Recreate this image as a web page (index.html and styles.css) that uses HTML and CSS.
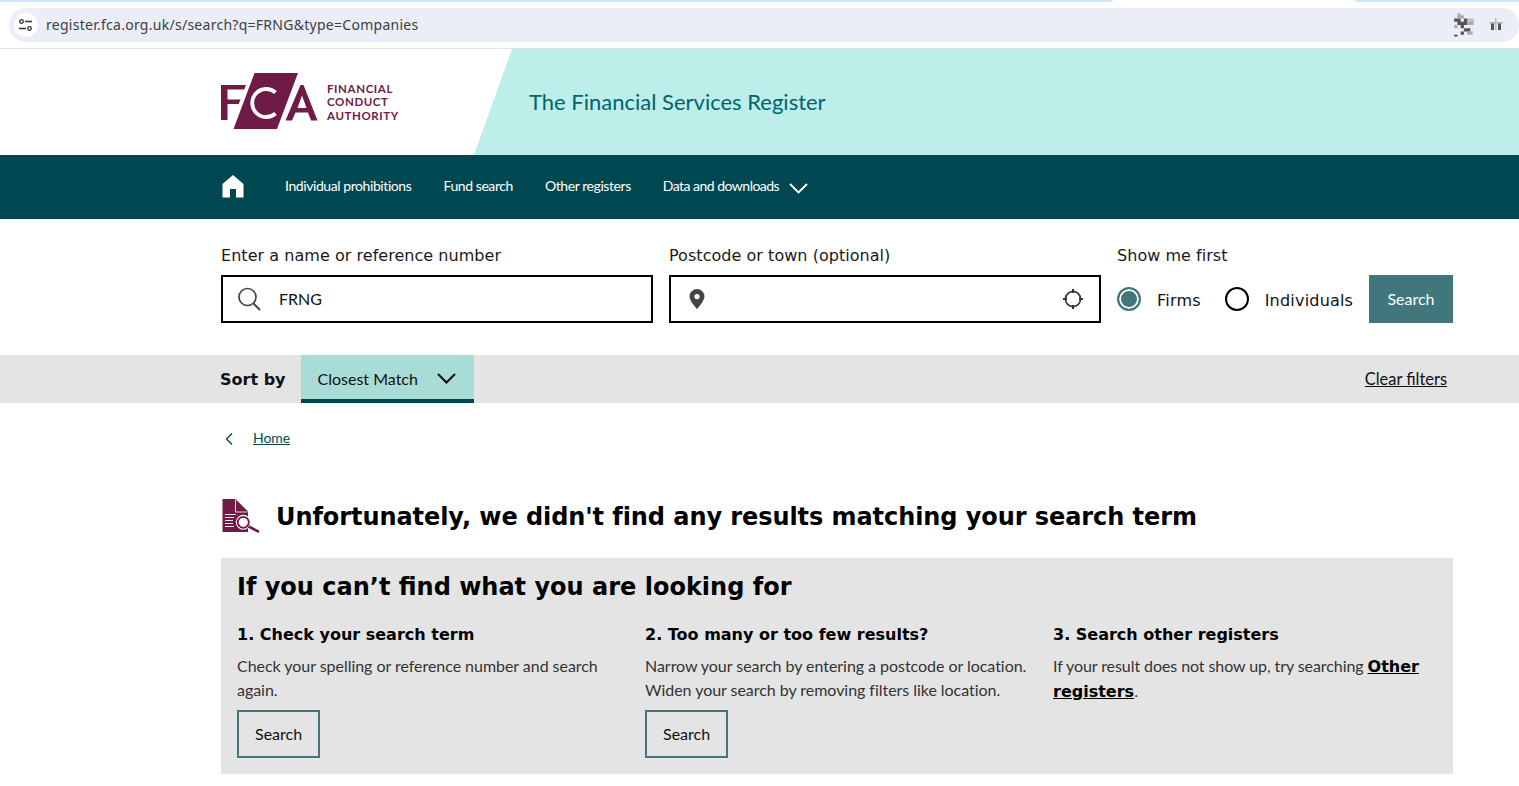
FILE: index.html
```html
<!DOCTYPE html>
<html lang="en">
<head>
<meta charset="utf-8">
<title>Financial Services Register</title>
<link rel="stylesheet" href="styles.css">
</head>
<body>
<div class="chrome">
  <div class="tabstrip"><span class="strip-a"></span><span class="strip-b"></span><span class="strip-c"></span></div>
  <div class="addressbar">
    <span class="site-icon">
      <svg width="16" height="12" viewBox="0 0 16 12"><circle cx="3.5" cy="2.5" r="1.8" fill="none" stroke="#333" stroke-width="1.3"/><path d="M7 2.5h7M1 9.5h7" stroke="#333" stroke-width="1.6"/><circle cx="11.5" cy="9.5" r="1.8" fill="none" stroke="#333" stroke-width="1.3"/></svg>
    </span>
    <span class="url">register.fca.org.uk/s/search?q=FRNG&amp;type=Companies</span>
    <span class="ext-icons">
      <svg width="22" height="26" viewBox="0 0 20 24"><path d="M3 1h3v3H3zM12 6h6v3h-6z" fill="#bbb"/><path d="M0 6h6v3H0zM9 6h3v6H9zM3 9h6v3H3zM6 12h3v3H6zM9 15h6v3H9zM6 18h3v3H6z" fill="#555"/><path d="M12 9h6v3h-6zM0 12h3v3H0zM12 18h5v3h-5zM3 3h6v3H3z" fill="#aaa"/><path d="M0 21h3v1.500H0z" fill="#333"/></svg>
      <svg width="14" height="14" viewBox="0 0 14 14"><path d="M2 5h3v7H2zM9 5h3v7H9z" fill="#555"/><path d="M0 4h14v1.500H0zM6 0h1.500v12H6z" fill="#bbb"/></svg>
    </span>
  </div>
</div>

<header class="masthead">
  <div class="brand">
    <svg class="fca-mark" width="98" height="57" viewBox="0 0 98 57" aria-label="FCA">
      <path d="M0 12h25l-1.800 4.500H6.500V26.500h13l-1.800 4.500H6.500v16H0z" fill="#701b45"/>
      <path d="M33.500 0h43.500L56 56H12.500z" fill="#701b45"/>
      <path d="M54.500 19.500A14 14 0 1 0 54.500 40.500" fill="none" stroke="#fff" stroke-width="3.800"/>
      <path d="M64.500 47.500 79.500 12h3L96.500 47.500h-6.500l-3-8H74.500l-3.500 8zM76.500 35h9L81 22.500z" fill="#701b45" fill-rule="evenodd"/>
    </svg>
    <div class="brand-name">FINANCIAL<br>CONDUCT<br>AUTHORITY</div>
  </div>
  <div class="tagline"><span>The Financial Services Register</span></div>
</header>

<nav class="mainnav">
  <svg class="home" width="22" height="23" viewBox="0 0 22 23"><path d="M11 0 21.500 9v13.500H14V14H8v8.500H.5V9z" fill="#fff" stroke="none"/></svg>
  <a href="#">Individual prohibitions</a>
  <a href="#">Fund search</a>
  <a href="#">Other registers</a>
  <a href="#" class="has-menu">Data and downloads
    <svg width="19" height="11" viewBox="0 0 19 11"><path d="M1 1l8.500 8.500L18 1" fill="none" stroke="#fff" stroke-width="1.800"/></svg>
  </a>
</nav>

<section class="searchform">
  <div class="field">
    <label>Enter a name or reference number</label>
    <div class="inputbox">
      <svg width="24" height="24" viewBox="0 0 24 24"><circle cx="10.500" cy="10" r="8.500" fill="none" stroke="#444" stroke-width="1.700"/><path d="M16.500 16.500 23 23" stroke="#444" stroke-width="2"/></svg>
      <span class="value">FRNG</span>
    </div>
  </div>
  <div class="field">
    <label>Postcode or town (optional)</label>
    <div class="inputbox postcode">
      <svg class="pin" width="16" height="20" viewBox="0 0 16 20"><path fill-rule="evenodd" d="M8 0a7.500 7.500 0 0 1 7.500 7.500C15.500 12 8 20 8 20S.5 12 .5 7.500A7.500 7.500 0 0 1 8 0zm0 5a2.600 2.600 0 1 0 0 5.200A2.600 2.600 0 0 0 8 5z" fill="#444"/></svg>
      <svg class="locate" width="20" height="20" viewBox="0 0 20 20"><circle cx="10" cy="10" r="7.500" fill="none" stroke="#333" stroke-width="1.700"/><path d="M10 0v4M10 16v4M0 10h4M16 10h4" stroke="#333" stroke-width="2.200"/></svg>
    </div>
  </div>
  <div class="field showfirst">
    <label>Show me first</label>
    <div class="radios">
      <span class="radio checked"></span><span class="radio-label firms">Firms</span>
      <span class="radio"></span><span class="radio-label">Individuals</span>
      <button class="primary">Search</button>
    </div>
  </div>
</section>

<section class="sortbar">
  <span class="sort-label">Sort by</span>
  <div class="sort-select"><span class="sort-value">Closest Match</span>
    <svg width="19" height="11" viewBox="0 0 19 11"><path d="M1 1l8.500 8.500L18 1" fill="none" stroke="#111" stroke-width="2"/></svg>
  </div>
  <a class="clear" href="#">Clear filters</a>
</section>

<main class="content">
  <div class="crumbs">
    <svg width="8" height="12" viewBox="0 0 8 12"><path d="M7 .5 1.500 6 7 11.500" fill="none" stroke="#00494f" stroke-width="1.400"/></svg>
    <a href="#">Home</a>
  </div>
  <div class="noresults">
    <svg width="38" height="35" viewBox="0 0 38 35">
      <path d="M.5 1h13L26 13.500V34H.5z" fill="#701b45"/>
      <path d="M13.500 1.500V14H25.500" fill="none" stroke="#e6d3dc" stroke-width="1"/>
      <path d="M3 16.500h11M3 19.500h9M3 22.500h8M3 25.500h8M3 28.500h9" stroke="#f0e4ea" stroke-width="1.200"/>
      <circle cx="21.300" cy="24.300" r="7.500" fill="#fff"/>
      <circle cx="21.300" cy="24.300" r="5.500" fill="#fff" stroke="#701b45" stroke-width="1.800"/>
      <path d="M26.500 28.500 37 33.800" stroke="#701b45" stroke-width="2.600"/>
    </svg>
    <h1>Unfortunately, we didn't find any results matching your search term</h1>
  </div>
  <section class="helpbox">
    <h2>If you can’t find what you are looking for</h2>
    <div class="helpcols">
      <div class="helpcol">
        <h3>1. Check your search term</h3>
        <p>Check your spelling or reference number and search again.</p>
        <a class="outline" href="#">Search</a>
      </div>
      <div class="helpcol">
        <h3>2. Too many or too few results?</h3>
        <p>Narrow your search by entering a postcode or location. Widen your search by removing filters like location.</p>
        <a class="outline" href="#">Search</a>
      </div>
      <div class="helpcol third">
        <h3>3. Search other registers</h3>
        <p>If your result does not show up, try searching <a class="strong-link" href="#"><span>Other</span> <span>registers</span></a>.</p>
      </div>
    </div>
  </section>
</main>
</body>
</html>
```
FILE: styles.css
```css
* { box-sizing: border-box; }
html, body { margin: 0; padding: 0; }
body {
  width: 1519px;
  height: 786px;
  overflow: hidden;
  background: #fff;
  font-family: Lato, "Liberation Sans", sans-serif;
  color: #111;
}
a { color: inherit; }

.chrome { height: 49px; border-bottom: 1px solid #e3e3e3; background: #fff; }
.tabstrip { display: flex; height: 2px; }
.strip-a { width: 1113px; background: #d3e3fd; border-bottom-right-radius: 4px; }
.strip-b { width: 242px; background: #fff; }
.strip-c { flex: 1; background: #d3e3fd; border-bottom-left-radius: 4px; }
.addressbar {
  display: flex;
  align-items: center;
  height: 34px;
  margin: 6px 0 0 9px;
  padding-left: 5px;
  background: #ebeef7;
  border-radius: 17px;
}
.site-icon {
  display: flex;
  align-items: center;
  justify-content: center;
  width: 24px;
  height: 24px;
  border-radius: 50%;
  background: #fff;
}
.url { margin-left: 8px; margin-top: -2px; font-size: 14px; letter-spacing: .27px; color: #3c4043; font-family: "Noto Sans", sans-serif; }
.ext-icons { display: flex; align-items: center; gap: 13px; margin-left: auto; margin-right: 16px; }

.masthead { display: flex; height: 106px; }
.brand { display: flex; align-items: center; width: 474px; padding-left: 221px; }
.fca-mark { margin-top: -2px; }
.brand-name {
  margin-left: 8px;
  font-size: 11.500px;
  line-height: 13.500px;
  font-weight: 700;
  letter-spacing: .6px;
  color: #701b45;
}
.tagline {
  flex: 1;
  display: flex;
  align-items: center;
  padding: 0 0 2px 55px;
  background: #bdeeea;
  clip-path: polygon(38px 0, 100% 0, 100% 100%, 0 100%);
  font-size: 22px;
  color: #00646b;
}

.mainnav {
  display: flex;
  align-items: center;
  height: 64px;
  padding-left: 222px;
  background: #004851;
  color: #fff;
  font-size: 14px;
}
.mainnav a { text-decoration: none; margin-right: 32px; white-space: nowrap; letter-spacing: -.42px; margin-top: -4px; }
.mainnav .has-menu { letter-spacing: -.52px; }
.home { margin-right: 41px; margin-top: -2px; }
.has-menu svg { margin-left: 7px; vertical-align: -3px; }

.searchform { display: flex; gap: 16px; height: 136px; padding: 24px 0 0 221px; }
.field { width: 432px; }
.field label {
  display: block;
  height: 32px;
  padding-top: 1px;
  font-family: "DejaVu Sans", sans-serif;
  font-size: 16px;
  line-height: 24px;
  letter-spacing: .04px;
  color: #1a1a1a;
}
.inputbox {
  display: flex;
  align-items: center;
  height: 48px;
  padding: 0 16px 0 14px;
  border: 2px solid #000;
}
.value { margin-left: 18px; margin-top: -2px; font-size: 16px; }
.pin { margin-left: 4px; margin-top: -1px; }
.locate { margin-left: auto; margin-right: 0; }
.showfirst { width: 336px; }
.radios { display: flex; align-items: center; height: 48px; }
.radio {
  width: 24px;
  height: 24px;
  border: 2px solid #000;
  border-radius: 50%;
  background: #fff;
}
.radio.checked { border-color: #41767d; background: #41767d; box-shadow: inset 0 0 0 2px #fff; }
.radio-label { margin: 2px 0 0 16px; font-family: "DejaVu Sans", sans-serif; font-size: 16px; letter-spacing: .2px; }
.radio-label.firms { margin-right: 24px; }
.primary {
  width: 84px;
  height: 48px;
  margin-left: auto;
  padding: 0 0 2px;
  border: 0;
  background: #41767d;
  color: #fff;
  font-family: Lato, sans-serif;
  font-size: 16px;
}

.sortbar {
  display: flex;
  align-items: center;
  height: 48px;
  padding: 0 72px 0 220px;
  background: #e4e4e4;
}
.sort-label { width: 81px; font-family: "DejaVu Sans", sans-serif; font-size: 16px; font-weight: 700; }
.sort-select {
  display: flex;
  align-items: center;
  justify-content: space-between;
  width: 173px;
  height: 48px;
  padding: 0 18px 0 16.500px;
  background: #aadcd7;
  border-bottom: 4px solid #004851;
  font-size: 16px;
}
.sort-value { margin-top: 2px; }
.sort-select svg { margin-top: 3px; }
.clear { margin-left: auto; margin-top: -1px; font-size: 16.400px; }

.content { width: 1232px; margin-left: 221px; }
.crumbs { display: flex; align-items: center; height: 70px; padding: 0 0 0 4px; font-size: 14px; color: #00494f; }
.crumbs svg { margin-top: 2px; }
.crumbs a { margin-left: 20px; margin-top: -1px; letter-spacing: -.05px; }
.noresults { display: flex; align-items: center; height: 85px; padding-left: 1px; }
.noresults h1 {
  margin: 2px 0 0 16px;
  font-family: "DejaVu Sans", sans-serif;
  font-size: 24px;
  letter-spacing: -.07px;
  font-weight: 700;
  color: #000;
  white-space: nowrap;
}
.helpbox { height: 216px; padding: 11px 16px 0; background: #e4e4e4; }
.helpbox h2 { margin: 0; font-family: "DejaVu Sans", sans-serif; font-size: 24px; line-height: 36px; color: #000; }
.helpcols { display: grid; grid-template-columns: 408px 408px 1fr; margin-top: 18px; }
.helpcol h3 { margin: 0; font-family: "DejaVu Sans", sans-serif; font-size: 16px; line-height: 24px; color: #000; }
.helpcol p { margin: 7px 0 0; font-size: 16px; line-height: 24px; letter-spacing: -.04px; color: #333; width: 385px; }
.third p { letter-spacing: -.08px; }
.outline {
  display: inline-block;
  margin-top: 8px;
  padding: 0 16px;
  height: 48px;
  line-height: 44px;
  border: 2px solid #41767d;
  font-size: 16px;
  text-decoration: none;
  color: #111;
}
.strong-link { font-family: "DejaVu Sans", sans-serif; font-weight: 700; color: #000; font-size: 16px; letter-spacing: 0; }
```
